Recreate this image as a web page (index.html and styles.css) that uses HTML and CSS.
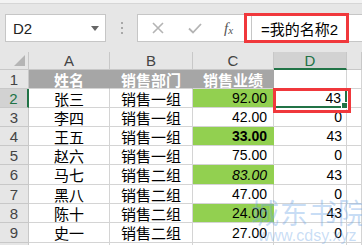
FILE: index.html
```html
<!DOCTYPE html>
<html lang="zh">
<head>
  <meta charset="UTF-8" />
  <title>销售业绩</title>
  <link rel="stylesheet" href="styles.css">
</head>
<body>
  <div class="top-strip"></div>

  <div class="formula-bar">
    <div class="name-box">
      <span>D2</span>
      <span class="arrow"></span>
    </div>
    <div class="dots">
      <svg width="4" height="14" viewBox="0 0 4 14">
        <rect x="1" y="1" width="2" height="2" fill="#a8a8a8"/>
        <rect x="1" y="6" width="2" height="2" fill="#a8a8a8"/>
        <rect x="1" y="11" width="2" height="2" fill="#a8a8a8"/>
      </svg>
    </div>
    <div class="fx-buttons">
      <svg class="btn-cancel" width="12" height="12" viewBox="0 0 12 12">
        <path d="M1 1 L11 11 M11 1 L1 11" stroke="#b4b4b4" stroke-width="1.6" fill="none"/>
      </svg>
      <svg class="btn-ok" width="14" height="11" viewBox="0 0 14 11">
        <path d="M1 5.5 L5 9.5 L13 1" stroke="#b4b4b4" stroke-width="1.8" fill="none"/>
      </svg>
      <span class="fx">f<sub>x</sub></span>
    </div>
    <div class="formula-input">
      <span>=我的名称2</span>
      <div class="mark"></div>
    </div>
  </div>

  <div class="sheet">
    <!-- 列标题 -->
    <div class="corner"><span class="tri"></span></div>
    <div class="col-head">A</div>
    <div class="col-head">B</div>
    <div class="col-head">C</div>
    <div class="col-head active">D</div>
    <div class="col-head"></div>

    <!-- 1 -->
    <div class="row-head">1</div>
    <div class="cell title">姓名</div>
    <div class="cell title">销售部门</div>
    <div class="cell title">销售业绩</div>
    <div class="cell"></div>
    <div class="cell"></div>

    <!-- 2 -->
    <div class="row-head active">2</div>
    <div class="cell name">张三</div>
    <div class="cell name">销售一组</div>
    <div class="cell num green">92.00</div>
    <div class="cell num last selected">43<div class="mark"></div><span class="handle"></span></div>
    <div class="cell"></div>

    <!-- 3 -->
    <div class="row-head">3</div>
    <div class="cell name">李四</div>
    <div class="cell name">销售一组</div>
    <div class="cell num">42.00</div>
    <div class="cell num last">0</div>
    <div class="cell"></div>

    <!-- 4 -->
    <div class="row-head">4</div>
    <div class="cell name">王五</div>
    <div class="cell name">销售一组</div>
    <div class="cell num green bold">33.00</div>
    <div class="cell num last">43</div>
    <div class="cell"></div>

    <!-- 5 -->
    <div class="row-head">5</div>
    <div class="cell name">赵六</div>
    <div class="cell name">销售一组</div>
    <div class="cell num">75.00</div>
    <div class="cell num last">0</div>
    <div class="cell"></div>

    <!-- 6 -->
    <div class="row-head">6</div>
    <div class="cell name">马七</div>
    <div class="cell name">销售二组</div>
    <div class="cell num green italic">83.00</div>
    <div class="cell num last">43</div>
    <div class="cell"></div>

    <!-- 7 -->
    <div class="row-head">7</div>
    <div class="cell name">黑八</div>
    <div class="cell name">销售二组</div>
    <div class="cell num">47.00</div>
    <div class="cell num last">0</div>
    <div class="cell"></div>

    <!-- 8 -->
    <div class="row-head">8</div>
    <div class="cell name">陈十</div>
    <div class="cell name">销售二组</div>
    <div class="cell num green">24.00</div>
    <div class="cell num last">43</div>
    <div class="cell"></div>

    <!-- 9 -->
    <div class="row-head">9</div>
    <div class="cell name">史一</div>
    <div class="cell name">销售二组</div>
    <div class="cell num">27.00</div>
    <div class="cell num last">0</div>
    <div class="cell"></div>

    <!-- 10（只露出一条边） -->
    <div class="row-head"></div>
    <div class="cell"></div>
    <div class="cell"></div>
    <div class="cell"></div>
    <div class="cell"></div>
    <div class="cell"></div>
  </div>

  <div class="watermark">
    <div class="wm-big">城东书院</div>
    <div class="wm-small">www.cdsy.xyz</div>
  </div>
</body>
</html>
```

FILE: styles.css
```css
body {
  margin: 0;
  width: 362px;
  height: 245px;
  overflow: hidden;
  position: relative;
  background: #e6e6e6;
  font-family: "Liberation Sans", "Noto Sans CJK SC", sans-serif;
  color: #000;
}

.top-strip {
  height: 3px;
  background: #f3f3f3;
  border-bottom: 1px solid #d6d6d6;
}

/* 编辑栏 */
.formula-bar {
  display: flex;
  height: 28px;
  padding: 10px 0 10px 5px;
}
.name-box {
  box-sizing: border-box;
  width: 101px;
  height: 28px;
  background: white;
  border: 1px solid #c6c6c6;
  display: flex;
  align-items: center;
  padding-left: 7px;
  font-size: 15px;
  color: #222;
}
.arrow {
  margin-left: auto;
  margin-right: 6px;
  width: 0;
  height: 0;
  border-left: 4px solid transparent;
  border-right: 4px solid transparent;
  border-top: 5px solid #666;
}
.dots {
  width: 31px;
  display: flex;
  align-items: center;
  justify-content: center;
}
.fx-buttons {
  box-sizing: border-box;
  width: 114px;
  height: 28px;
  background: white;
  border: 1px solid #c6c6c6;
  border-right: none;
  display: flex;
  align-items: center;
}
.btn-cancel {
  margin-left: 14px;
}
.btn-ok {
  margin-left: 24px;
}
.fx {
  margin-left: 22px;
  font-family: "Liberation Serif", serif;
  font-style: italic;
  font-size: 15px;
  color: #555;
}
.fx sub {
  font-size: 11px;
  vertical-align: -1px;
}
.formula-input {
  position: relative;
  flex: 1;
  box-sizing: border-box;
  height: 28px;
  background: white;
  border: 1px solid #c6c6c6;
  border-right: none;
  display: flex;
  align-items: center;
  padding-left: 9px;
  font-size: 15px;
}
.formula-input .mark {
  position: absolute;
  left: -8px;
  top: -2px;
  width: 99px;
  height: 24px;
  border: 3px solid #f0383c;
}

/* 表格 */
.sheet {
  display: grid;
  grid-template-columns: 29px 81px 83px 81px 73px 15px;
  grid-template-rows: 18px 19px 19px 19px 19px 19px 20px 19px 19px 20px 19px;
  background: white;
}
.sheet > div {
  box-sizing: border-box;
  display: flex;
  align-items: center;
}
.corner,
.col-head,
.row-head {
  background: #e6e6e6;
  color: #444;
  font-size: 15px;
  border-right: 1px solid #c8c8c8;
  border-bottom: 1px solid #c8c8c8;
  justify-content: center;
}
.corner {
  align-items: flex-end !important;
  justify-content: flex-end;
  padding: 0 3px 3px 0;
}
.tri {
  width: 0;
  height: 0;
  border-left: 11px solid transparent;
  border-bottom: 11px solid #b5b5b5;
}
.col-head.active {
  background: #d2d2d2;
  color: #217346;
  border-bottom: 2px solid #217346;
}
.row-head.active {
  background: #d2d2d2;
  color: #217346;
  border-right: 2px solid #217346;
}
.cell {
  border-right: 1px solid #d4d4d4;
  border-bottom: 1px solid #d4d4d4;
  font-size: 15px;
}
.title {
  background: #a6a6a6;
  border-right-color: #a6a6a6;
  color: white;
  font-weight: bold;
  justify-content: center;
}
.name {
  justify-content: center;
}
.num {
  justify-content: flex-end;
  padding-right: 6px;
  font-size: 14px;
}
.num.last {
  padding-right: 4px;
}
.green {
  background: #92d050;
  border-right-color: #92d050;
}
.bold {
  font-weight: bold;
}
.italic {
  font-style: italic;
}
.selected {
  position: relative;
  border: 2px solid #217346;
  border-top-width: 1px;
  padding-right: 3px;
}
.selected .mark {
  position: absolute;
  left: -3px;
  top: -2px;
  width: 72px;
  height: 19px;
  border: 3px solid #f0383c;
}
.handle {
  position: absolute;
  right: -3px;
  bottom: -3px;
  width: 5px;
  height: 5px;
  background: #217346;
  border: 1px solid white;
}

/* 水印 */
.watermark {
  position: absolute;
  left: 251px;
  top: 196px;
  color: rgba(110, 165, 230, 0.38);
  white-space: nowrap;
  pointer-events: none;
}
.wm-big {
  font-family: "Noto Sans CJK SC", sans-serif;
  font-size: 28px;
  line-height: 32px;
  letter-spacing: 1px;
}
.wm-small {
  font-size: 16px;
  line-height: 16px;
  margin-left: 7px;
}
```
